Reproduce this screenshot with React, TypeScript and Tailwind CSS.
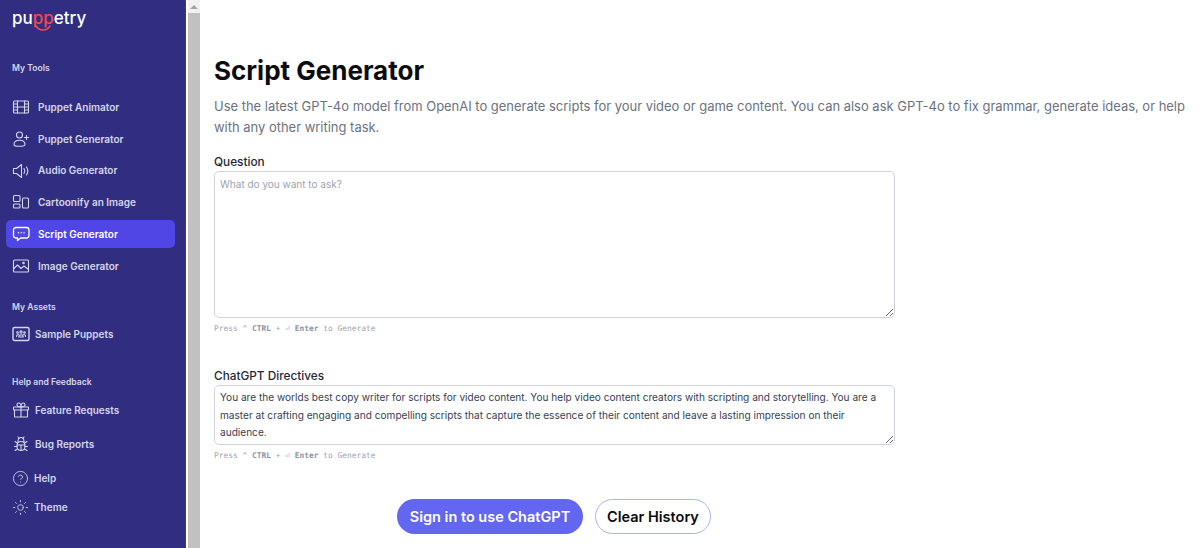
import { CircleHelp, Sun } from 'lucide-react'
import type { ReactNode } from 'react'

function Ico({ children, w = 18 }: { children: ReactNode; w?: number }) {
  return (
    <svg width={w} height="18" viewBox={`0 0 ${w} 18`} fill="none" stroke="currentColor" strokeWidth="1.1" strokeLinecap="round" strokeLinejoin="round" className="relative shrink-0">
      {children}
    </svg>
  )
}

const FilmIcon = () => (
  <Ico>
    <rect x="1.5" y="3" width="15" height="12" rx="1" />
    <path d="M5.5 3v12M12.5 3v12M1.5 6h4M1.5 9h4M1.5 12h4M12.5 6h4M12.5 9h4M12.5 12h4M5.5 9h7" />
  </Ico>
)
const PersonPlusIcon = () => (
  <Ico>
    <circle cx="7.5" cy="5" r="3" />
    <path d="M2 14.5c0-2.6 2.4-4.2 5.5-4.2s5.5 1.6 5.5 4.2c0 1.3-1.7 1.8-5.5 1.8S2 15.8 2 14.5z" />
    <path d="M14.5 5.5v4M12.5 7.5h4" />
  </Ico>
)
const SpeakerIcon = () => (
  <Ico>
    <path d="M1.5 6.5h3l5-4v13l-5-4h-3z" />
    <path d="M12 6.5c1 1.5 1 3.5 0 5M14.5 5c1.6 2.5 1.6 5.5 0 8" />
  </Ico>
)
const BlocksIcon = () => (
  <Ico>
    <rect x="1.5" y="2.5" width="6.5" height="6" rx="1" />
    <rect x="1.5" y="11" width="6.5" height="4" rx="1" />
    <rect x="10.5" y="5" width="6" height="10" rx="1" />
  </Ico>
)
const BubbleIcon = () => (
  <Ico>
    <path d="M4 2.5h10.5a2.5 2.5 0 0 1 2.5 2.5v5.5a2.5 2.5 0 0 1-2.5 2.5H8.5l-3 2.5v-2.5H4a2.5 2.5 0 0 1-2.500-2.500V5A2.500 2.500 0 0 1 4 2.500z" strokeWidth="1.3" />
    <path d="M6.5 7.8h.01M9.2 7.8h.01M12 7.8h.01" strokeWidth="1.4" />
  </Ico>
)
const PictureIcon = () => (
  <Ico>
    <rect x="1.5" y="3" width="15" height="12" rx="1" />
    <path d="M1.5 12l4-4 3.5 3.5 3-2.5 4.5 3.5" />
    <circle cx="11.5" cy="6" r=".8" />
  </Ico>
)
const GroupIcon = () => (
  <Ico>
    <rect x="1" y="2.5" width="16" height="13" rx="1.5" strokeWidth="1.4" />
    <path d="M4.500 11.500c0-1.300 1-2 2-2M13.500 11.500c0-1.300-1-2-2-2M6.800 12c0-1.500 1-2.300 2.200-2.300s2.200.8 2.200 2.300z" />
    <circle cx="9" cy="7" r="1.1" />
    <circle cx="5.5" cy="7.5" r=".8" />
    <circle cx="12.5" cy="7.5" r=".8" />
  </Ico>
)
const GiftIcon = () => (
  <Ico>
    <rect x="1.5" y="6" width="15" height="3" rx=".5" />
    <path d="M2.5 9v6.500a.5.5 0 0 0 .5.5h12a.5.5 0 0 0 .5-.5V9M9 6v10" />
    <path d="M9 6C7 6 5 5.3 5 3.8 5 2.8 5.8 2 6.8 2 8.300 2 9 4 9 6zM9 6c2 0 4-.7 4-2.200C13 2.800 12.200 2 11.200 2 9.700 2 9 4 9 6z" />
  </Ico>
)
const BugIcon = () => (
  <Ico>
    <path d="M5 11c0-3 1.600-4.500 4-4.500s4 1.500 4 4.500c0 2.800-1.800 4.500-4 4.500S5 13.800 5 11z" />
    <path d="M6 6.500C6 4 7.300 2.500 9 2.500S12 4 12 6.500M5.200 10h7.600M9 10v5.500" />
    <path d="M6 2l1 1.500M12 2l-1 1.500M5.500 8L3 6.500M12.500 8L15 6.500M5 11.500H2.500M13 11.500h2.500M5.500 14L3 15.500M12.500 14l2.500 1.500" />
  </Ico>
)

const TOOLS = [
  { label: 'Puppet Animator', icon: <FilmIcon />, h: 'h-[32px]' },
  { label: 'Puppet Generator', icon: <PersonPlusIcon />, h: 'h-[32px]' },
  { label: 'Audio Generator', icon: <SpeakerIcon />, h: 'h-[31px]' },
  { label: 'Cartoonify an Image', icon: <BlocksIcon />, h: 'h-[32px]' },
  { label: 'Script Generator', icon: <BubbleIcon />, h: 'h-[32px]', active: true },
  { label: 'Image Generator', icon: <PictureIcon />, h: 'h-[32px]' },
]

const HELP = [
  { label: 'Feature Requests', icon: <GiftIcon />, h: 'h-[34px]' },
  { label: 'Bug Reports', icon: <BugIcon />, h: 'h-[34px]' },
  { label: 'Help', icon: <CircleHelp size={17} strokeWidth={1.2} className="shrink-0" />, h: 'h-[34px]' },
  { label: 'Theme', icon: <Sun size={17} strokeWidth={1.2} className="shrink-0" />, h: 'h-[24px]' },
]

function Hint() {
  return (
    <p className="mt-[5px] h-[12px] font-['DejaVu_Sans_Mono',monospace] text-[7.9px] leading-[12px] text-[#9ca3af]">
      Press ^ <b className="font-semibold text-[#8b93a1]">CTRL</b> + ⏎ <b className="font-semibold text-[#8b93a1]">Enter</b> to Generate
    </p>
  )
}

export default function App() {
  return (
    <div className="flex h-[548px] w-[1200px] overflow-hidden bg-white font-['Inter',sans-serif]">
      {/* Sidebar */}
      <aside className="flex w-[186px] shrink-0 flex-col border-r border-[#3f3a8f] bg-[#312e81] text-[#d5d6ec]">
        <div className="h-[37px] pl-[12px] pt-[6px] text-[17px] font-medium leading-[24px] text-white">
          <span className="relative inline-block">
            pu<span className="text-[#f0484e]">pp</span>etry
            <svg width="18" height="6" viewBox="0 0 18 6" fill="none" className="absolute left-[22px] top-[19px]">
              <path d="M2 1c2 3 4 4 7 4s5-1 7-4" stroke="#f0484e" strokeWidth="1.5" strokeLinecap="round" />
            </svg>
          </span>
        </div>
        <div className="flex h-[62px] items-center pl-[12px] text-[8.6px] font-semibold">My Tools</div>
        <div className="-mt-[8px] flex flex-col">
          {TOOLS.map((t) => (
            <div key={t.label} className={`mx-[6px] flex items-center ${t.h}`}>
              <div className={`flex h-[28px] w-[169px] items-center rounded-[5px] pl-[6px] ${t.active ? 'bg-[#4f46e5] text-white' : ''}`}>
                {t.icon}
                <span className="ml-[8px] text-[10px] font-semibold">{t.label}</span>
              </div>
            </div>
          ))}
        </div>
        <div className="mt-[17px] flex h-[17px] items-center pl-[12px] text-[8.6px] font-semibold">My Assets</div>
        <div className="mt-[1px] flex h-[34px] items-center pl-[12px]">
          <GroupIcon />
          <span className="ml-[5px] text-[10px] font-semibold">Sample Puppets</span>
        </div>
        <div className="mt-[23px] flex h-[17px] items-center pl-[12px] text-[8.6px] font-semibold">Help and Feedback</div>
        <div className="mt-[2px] flex flex-col">
          {HELP.map((h) => (
            <div key={h.label} className={`flex items-center gap-[5px] pl-[12px] ${h.h}`}>
              {h.icon}
              <span className="text-[10px] font-semibold">{h.label}</span>
            </div>
          ))}
        </div>
      </aside>

      {/* Scrollbar */}
      <div className="ml-[2px] flex w-[12px] shrink-0 flex-col bg-[#c1c1c1]">
        <div className="flex h-[13px] items-center justify-center bg-[#f1f1f1]">
          <div className="h-0 w-0 border-x-[4px] border-b-[4px] border-x-transparent border-b-[#a3a3a3]" />
        </div>
      </div>

      {/* Main */}
      <main className="min-w-0 flex-1 pl-[14px] pt-[53px]">
        <h1 className="text-[26px] font-bold leading-[36px] text-[#0b0b0f]">Script Generator</h1>
        <p className="mt-[7px] w-[985px] text-[12.96px] leading-[21px] text-[#6b7280]">
          Use the latest GPT-4o model from OpenAI to generate scripts for your video or game content. You can also ask GPT-4o to fix grammar, generate ideas, or help with any other writing task.
        </p>
        <label className="mt-[16px] block text-[11.8px] font-medium leading-[17px] text-[#1f2937]">Question</label>
        <textarea
          readOnly
          placeholder="What do you want to ask?"
          className="block h-[147px] w-[681px] rounded-[5px] border border-[#d1d5db] px-[5px] py-[4px] text-[10px] leading-[16px] placeholder:text-[#9ca3af]"
        />
        <Hint />
        <label className="mt-[33px] block text-[11.8px] font-medium leading-[17px] text-[#1f2937]">ChatGPT Directives</label>
        <textarea
          readOnly
          value="You are the worlds best copy writer for scripts for video content. You help video content creators with scripting and storytelling. You are a master at crafting engaging and compelling scripts that capture the essence of their content and leave a lasting impression on their audience."
          className="block h-[60px] w-[681px] rounded-[5px] border border-[#d1d5db] px-[5px] py-[3px] text-[10.1px] leading-[17.5px] text-[#374151]"
        />
        <Hint />
        <div className="ml-[183px] mt-[37px] flex gap-[12px]">
          <button className="h-[35px] w-[186px] rounded-full bg-[#6366f1] text-[14.5px] font-semibold text-white">Sign in to use ChatGPT</button>
          <button className="h-[35px] w-[116px] rounded-full border border-[#a5b4fc] bg-white text-[14.5px] font-semibold text-[#0b0b0f]">Clear History</button>
        </div>
      </main>
    </div>
  )
}
